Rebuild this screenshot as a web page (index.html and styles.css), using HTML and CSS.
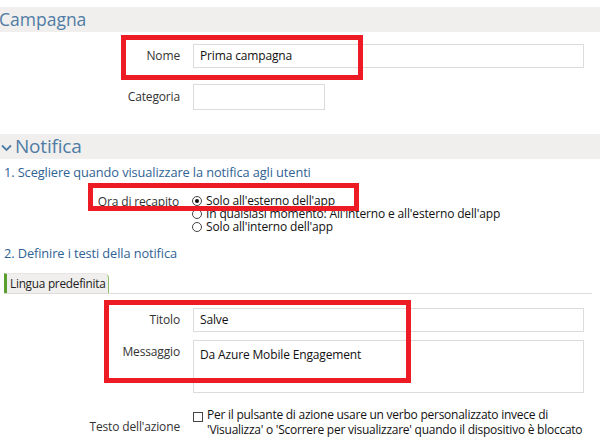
FILE: index.html
```html
<!DOCTYPE html>
<html lang="it">
<head>
<meta charset="utf-8">
<link rel="stylesheet" href="styles.css">
</head>
<body>
<div class="page">
  <div class="sec-head sec-campagna"><h2>Campagna</h2></div>
  <div class="row row-nome">
    <label class="lbl">Nome</label>
    <div class="input input-wide">Prima campagna</div>
  </div>
  <div class="row row-cat">
    <label class="lbl">Categoria</label>
    <div class="input input-small"></div>
  </div>

  <div class="sec-head sec-notifica"><h2><span class="chev"><svg width="11" height="8" viewBox="0 0 11 8"><path d="M1 1.5 L5.5 6 L10 1.5" fill="none" stroke="#4f7ca5" stroke-width="1.8"/></svg></span>Notifica</h2></div>
  <p class="step step1">1. Scegliere quando visualizzare la notifica agli utenti</p>
  <div class="row row-ora">
    <label class="lbl">Ora di recapito</label>
    <div class="radios">
      <div class="radio"><span class="dot on"></span>Solo all'esterno dell'app</div>
      <div class="radio"><span class="dot"></span>In qualsiasi momento: All'interno e all'esterno dell'app</div>
      <div class="radio"><span class="dot"></span>Solo all'interno dell'app</div>
    </div>
  </div>
  <p class="step step2">2. Definire i testi della notifica</p>
  <div class="tabs"><div class="tab">Lingua predefinita</div></div>
  <div class="row row-titolo">
    <label class="lbl">Titolo</label>
    <div class="input input-wide">Salve</div>
  </div>
  <div class="row row-msg">
    <label class="lbl">Messaggio</label>
    <div class="input input-wide textarea">Da Azure Mobile Engagement</div>
  </div>
  <div class="row row-azione">
    <label class="lbl">Testo dell'azione</label>
    <div class="check"><span class="box"></span><span class="check-text">Per il pulsante di azione usare un verbo personalizzato invece di<br>'Visualizza' o 'Scorrere per visualizzare' quando il dispositivo è bloccato</span></div>
  </div>

  <div class="mark mark1"></div>
  <div class="mark mark2"></div>
  <div class="mark mark3"></div>
</div>
</body>
</html>
```
FILE: styles.css
```css
* { box-sizing: border-box; }
html, body { margin: 0; padding: 0; background: #fff; }
body { font-family: "Open Sans", "Noto Sans", sans-serif; font-size: 12px; color: #222; letter-spacing: -0.15px; }
.page { position: relative; width: 600px; height: 445px; overflow: hidden; }

.sec-head { background: #f0efed; height: 25px; display: flex; align-items: center; }
.sec-head h2 { margin: 0; font-weight: 400; color: #4f7ca5; font-size: 18px; line-height: 25px; display: flex; align-items: center; letter-spacing: 0; }
.sec-campagna { margin-top: 7px; }
.sec-campagna h2 { font-size: 17.5px; margin-left: -1px; }
.sec-notifica { margin-top: 24px; }
.sec-notifica h2 { font-size: 19px; letter-spacing: -0.2px; }
.chev { width: 15px; display: flex; align-items: center; padding-left: 1px; padding-top: 2px; }

.row { display: flex; align-items: flex-start; }
.lbl { width: 180px; text-align: right; flex: none; color: #333; line-height: 16px; }
.input { margin-left: 13px; border: 1px solid #dcdcdc; background: #fff; color: #111; padding: 0 6px; }
.input-wide { width: 391px; height: 24px; line-height: 22px; }
.input-small { width: 132px; height: 26px; }
.textarea { height: 53px; line-height: 22px; padding-top: 3px; }

.row-nome { margin-top: 12px; }
.row-nome .lbl { padding-top: 4px; }
.row-cat { margin-top: 16px; }
.row-cat .lbl { padding-top: 5px; }

.step { margin: 0; color: #2f6293; font-size: 12.8px; line-height: 16px; padding-left: 4px; letter-spacing: -0.1px; }
.step1 { margin-top: 5px; }
.step2 { margin-top: 12px; }

.row-ora { margin-top: 10px; }
.row-ora .lbl { padding-top: 4px; padding-right: 1px; }
.radios { margin-left: 12px; display: flex; flex-direction: column; padding-top: 4px; }
.radio { display: flex; align-items: center; line-height: 13px; height: 13px; color: #111; white-space: nowrap; }
.dot { width: 10px; height: 10px; border: 1px solid #444; border-radius: 50%; margin-right: 4px; position: relative; flex: none; }
.dot.on::after { content: ""; position: absolute; left: 2px; top: 2px; width: 4px; height: 4px; border-radius: 50%; background: #111; }

.tabs { margin-top: 12px; margin-left: 4px; margin-right: 8px; border-bottom: 1px solid #dcdcdc; height: 21px; }
.tab { display: inline-block; height: 20px; background: #f0efed; border-left: 3px solid #5a9e2f; border-top: 1px solid #e6e6e6; border-right: 1px solid #8dc06a; border-top-right-radius: 5px; padding: 0 2px 0 3px; line-height: 19px; font-size: 11.8px; color: #222; letter-spacing: -0.25px; }

.row-titolo { margin-top: 14px; }
.row-titolo .lbl { padding-top: 4px; }
.row-msg { margin-top: 8px; }
.row-msg .lbl { padding-top: 4px; }

.row-azione { margin-top: 14px; }
.row-azione .lbl { padding-top: 12px; }
.check { margin-left: 13px; display: flex; align-items: flex-start; color: #111; }
.box { width: 10px; height: 10px; border: 1px solid #444; margin-top: 5px; margin-right: 4px; flex: none; }
.check-text { line-height: 15px; white-space: nowrap; letter-spacing: -0.25px; }

.mark { position: absolute; border: 5px solid #ed1c24; }
.mark1 { left: 121px; top: 35px; width: 242px; height: 45px; }
.mark2 { left: 88px; top: 183px; width: 271px; height: 28px; }
.mark3 { left: 104px; top: 300px; width: 307px; height: 83px; }
```
